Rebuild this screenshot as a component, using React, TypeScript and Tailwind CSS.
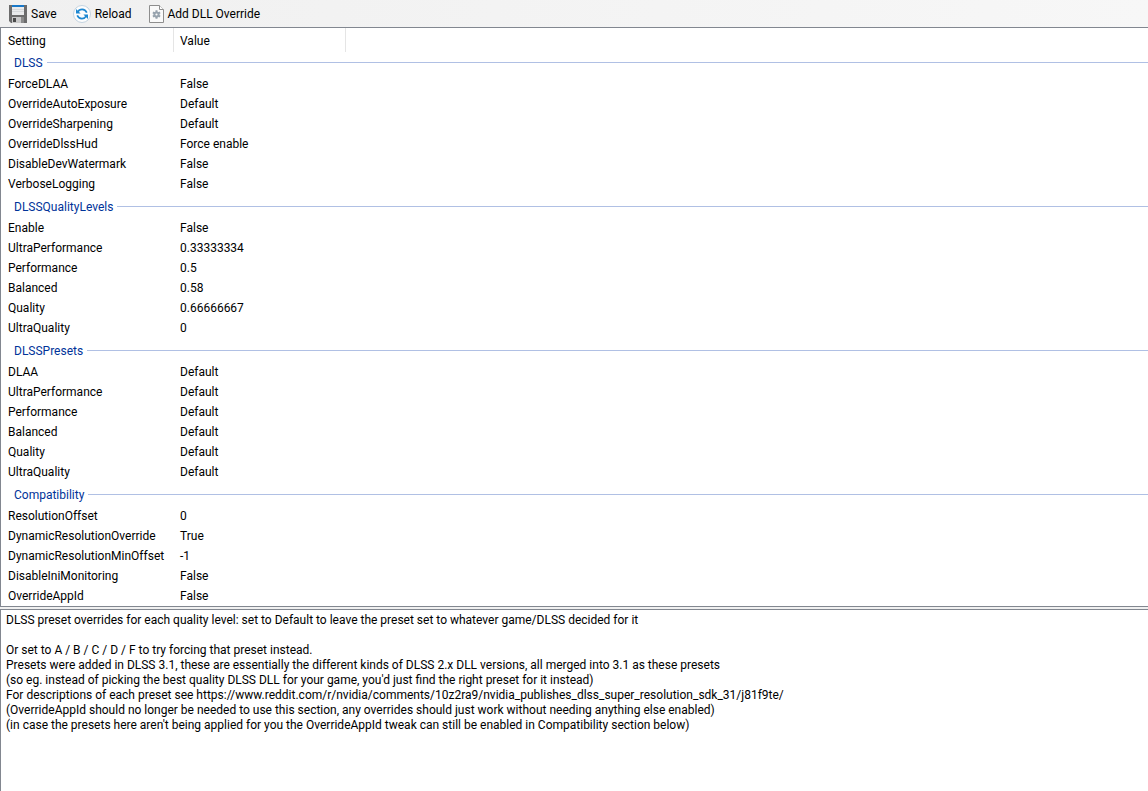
import type { ReactNode } from "react"

const groups = [
  {
    name: "DLSS",
    rows: [
      ["ForceDLAA", "False"],
      ["OverrideAutoExposure", "Default"],
      ["OverrideSharpening", "Default"],
      ["OverrideDlssHud", "Force enable"],
      ["DisableDevWatermark", "False"],
      ["VerboseLogging", "False"],
    ],
  },
  {
    name: "DLSSQualityLevels",
    rows: [
      ["Enable", "False"],
      ["UltraPerformance", "0.33333334"],
      ["Performance", "0.5"],
      ["Balanced", "0.58"],
      ["Quality", "0.66666667"],
      ["UltraQuality", "0"],
    ],
  },
  {
    name: "DLSSPresets",
    rows: [
      ["DLAA", "Default"],
      ["UltraPerformance", "Default"],
      ["Performance", "Default"],
      ["Balanced", "Default"],
      ["Quality", "Default"],
      ["UltraQuality", "Default"],
    ],
  },
  {
    name: "Compatibility",
    rows: [
      ["ResolutionOffset", "0"],
      ["DynamicResolutionOverride", "True"],
      ["DynamicResolutionMinOffset", "-1"],
      ["DisableIniMonitoring", "False"],
      ["OverrideAppId", "False"],
    ],
  },
]

const description = `DLSS preset overrides for each quality level: set to Default to leave the preset set to whatever game/DLSS decided for it

Or set to A / B / C / D / F to try forcing that preset instead.
Presets were added in DLSS 3.1, these are essentially the different kinds of DLSS 2.x DLL versions, all merged into 3.1 as these presets
(so eg. instead of picking the best quality DLSS DLL for your game, you'd just find the right preset for it instead)
For descriptions of each preset see https://www.reddit.com/r/nvidia/comments/10z2ra9/nvidia_publishes_dlss_super_resolution_sdk_31/j81f9te/
(OverrideAppId should no longer be needed to use this section, any overrides should just work without needing anything else enabled)
(in case the presets here aren't being applied for you the OverrideAppId tweak can still be enabled in Compatibility section below)`

function SaveIcon() {
  return (
    <svg width="18" height="18" viewBox="0 0 18 18" aria-hidden="true">
      <path d="M0 0h18v18H2l-2-2z" fill="#6c6c6c" />
      <path d="M3 0h12v10H3z" fill="#e9eaeb" />
      <path d="M3 0h12v2H3z" fill="#1878c8" />
      <path d="M3 4h12v1H3zM3 6h12v1H3z" fill="#d6d8da" />
      <path d="M3 12h12v6H3z" fill="#c9c9c9" />
      <path d="M4 13h3v4H4z" fill="#4a4a4a" />
      <path d="M12 12h3v6h-3z" fill="#8b8b8b" />
    </svg>
  )
}

function ReloadIcon() {
  return (
    <svg width="18" height="18" viewBox="0 0 18 18" aria-hidden="true">
      <circle cx="9" cy="9" r="8.5" fill="#fdfdfd" stroke="#c3d3e0" />
      <g fill="none" stroke="#1e88d2" strokeWidth="1.7">
        <path d="M4.8 6.8C6.6 3.6 11.8 3.2 13.8 7.6" />
        <path d="M13.2 11.2C11.4 14.4 6.2 14.8 4.2 10.4" />
      </g>
      <path d="M3 4v4.6h4.6zM15 14V9.4h-4.6z" fill="#1e88d2" />
    </svg>
  )
}

function DllIcon() {
  return (
    <svg width="16" height="18" viewBox="-1 0 16 18" aria-hidden="true">
      <path d="M.5.5h10l4 4v13H.5z" fill="#fafafa" stroke="#8e8e8e" />
      <path d="M10.5.5v4h4" fill="#fff" stroke="#8e8e8e" />
      <path d="M7.5 5.3v8.4M3.9 7.4l7.2 4.2M11.1 7.4l-7.2 4.2" stroke="#97a3ae" strokeWidth="2" />
      <circle cx="7.5" cy="9.5" r="2.1" fill="#fafafa" stroke="#97a3ae" strokeWidth="2" />
    </svg>
  )
}

function ToolButton({ icon, children }: { icon: ReactNode; children: ReactNode }) {
  return (
    <button type="button" className="flex items-center gap-1 whitespace-nowrap">
      {icon}
      <span>{children}</span>
    </button>
  )
}

export default function App() {
  return (
    <div className="flex min-h-screen flex-col bg-[#f0f0f0] font-[Roboto,'Open_Sans',sans-serif] text-[12px] leading-5 text-black">
      <div role="toolbar" className="flex h-[27px] items-center gap-4 bg-linear-to-r from-[#f0f0f0] to-[#f7f7f7] px-[9px]">
        <ToolButton icon={<SaveIcon />}>Save</ToolButton>
        <ToolButton icon={<ReloadIcon />}>Reload</ToolButton>
        <ToolButton icon={<DllIcon />}>Add DLL Override</ToolButton>
      </div>

      <div className="border-y border-l border-[#828790] bg-white">
        <table className="w-full table-fixed border-separate border-spacing-0 text-left">
          <colgroup>
            <col className="w-[173px]" />
            <col className="w-[172px]" />
            <col />
          </colgroup>
          <thead>
            <tr className="h-6">
              <th className="border-r border-[#e5e5e5] p-0 pt-0.5 pl-[7px] font-normal">Setting</th>
              <th className="border-r border-[#e5e5e5] p-0 pt-0.5 pl-1.5 font-normal">Value</th>
              <td className="p-0"></td>
            </tr>
          </thead>
          {groups.map((group, index) => (
            <tbody key={group.name}>
              <tr className={index === 0 ? "h-[22px]" : "h-6"}>
                <th colSpan={3} className="p-0 pb-px pl-[13px] align-bottom font-normal text-[#003399]">
                  <div className="flex h-[21px] items-center gap-1">
                    <span>{group.name}</span>
                    <span className="h-px flex-1 bg-[#b0c0e4]"></span>
                  </div>
                </th>
              </tr>
              {group.rows.map(([setting, value]) => (
                <tr key={setting} className="h-5">
                  <td className="p-0 pl-[7px]">{setting}</td>
                  <td className="p-0 pl-1.5">{value}</td>
                  <td className="p-0"></td>
                </tr>
              ))}
            </tbody>
          ))}
        </table>
      </div>

      <textarea
        readOnly
        aria-label="Setting description"
        rows={8}
        value={description}
        className="mt-0.5 w-full flex-1 resize-none border-t border-l border-[#828790] bg-white px-[5px] pt-[3px] leading-[15px] outline-none"
      />
    </div>
  )
}
